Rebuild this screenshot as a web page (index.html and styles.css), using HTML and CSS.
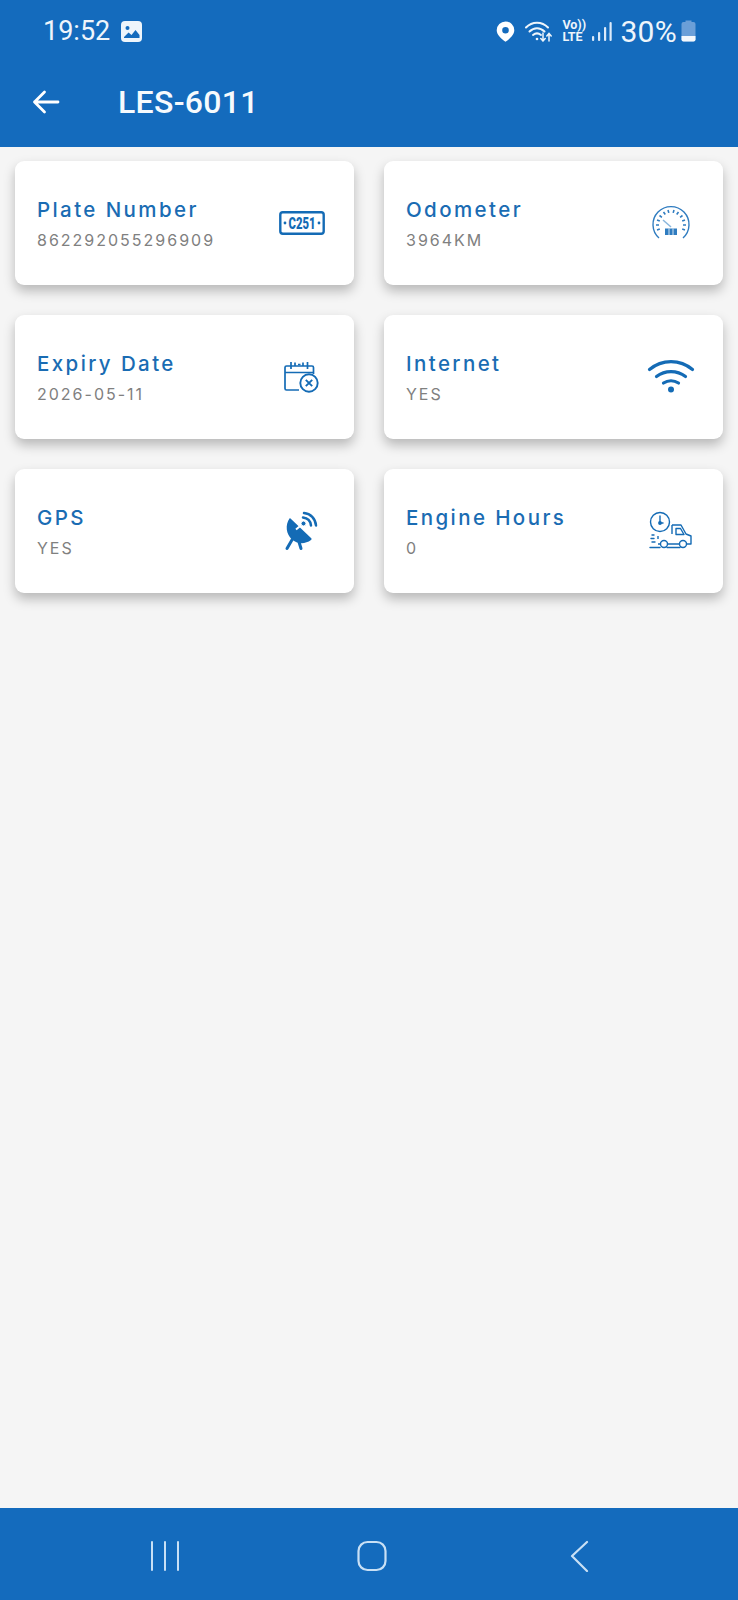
FILE: index.html
```html
<!DOCTYPE html>
<html lang="en">
<head>
    <meta charset="UTF-8">
    <meta name="viewport" content="width=device-width, initial-scale=1.0">
    <title>LES-6011</title>
    <link rel="stylesheet" href="styles.css">
</head>
<body>
    <div class="screen">
        <header class="top">
            <div class="status">
                <div class="status-left">
                    <span class="clock">19:52</span>
                    <svg class="st-photo" width="21" height="21" viewBox="0 0 21 21">
                        <rect width="21" height="21" rx="4" fill="#eef5fb"/>
                        <circle cx="6.500" cy="7" r="2" fill="#146bbd"/>
                        <path d="M3 16l4.500-4.500 3 2.500 4-5 4 5V17H3z" fill="#146bbd"/>
                    </svg>
                </div>
                <div class="status-right">
                    <svg width="19" height="21" viewBox="0 0 19 21">
                        <path fill-rule="evenodd" d="M9.500.5a8.800 8.800 0 0 1 8.800 8.800c0 4.600-5 9-8.800 11.400C5.700 18.300.7 13.900.7 9.300A8.800 8.800 0 0 1 9.500.5zm0 5.500a3.300 3.300 0 1 0 0 6.600 3.300 3.300 0 0 0 0-6.600z" fill="#fff"/>
                    </svg>
                    <svg class="st-wifi" width="27" height="22" viewBox="0 0 27 22" fill="none" stroke="#eef5fb" stroke-linecap="round">
                        <path d="M1 7.500C7 1 17 1 23 7.500" stroke-width="2"/>
                        <path d="M4.500 11.500c4.500-4.500 10.500-4.500 15 0" stroke-width="2"/>
                        <path d="M8 15c2.500-2 5.500-2 8 0" stroke-width="2"/>
                        <circle cx="12" cy="19" r="1.300" fill="#eef5fb" stroke="none"/>
                        <path d="M18 13v8M15.800 18.500l2.200 2.500 2.200-2.500M24 21v-7M21.800 16l2.200-2.500 2.200 2.500" stroke-width="1.500"/>
                    </svg>
                    <div class="volte"><span>Vo))</span><span>LTE</span></div>
                    <svg class="st-signal" width="20" height="21" viewBox="0 0 20 21" fill="#dceafa">
                        <rect x="0" y="15" width="2.200" height="5" rx="1"/>
                        <rect x="6" y="11" width="2.200" height="9" rx="1"/>
                        <rect x="12" y="6" width="2.200" height="14" rx="1"/>
                        <rect x="17.500" y="1" width="2.200" height="19" rx="1"/>
                    </svg>
                    <span class="battery-text">30%</span>
                    <svg width="15" height="22" viewBox="0 0 15 22">
                        <path d="M4.500.5h6V2h2a2 2 0 0 1 2 2v15.500a2 2 0 0 1-2 2h-10a2 2 0 0 1-2-2V4a2 2 0 0 1 2-2h2z" fill="#6b9fd8"/>
                        <path d="M.5 16h14v3.500a2 2 0 0 1-2 2h-10a2 2 0 0 1-2-2z" fill="#f4f8fc"/>
                    </svg>
                </div>
            </div>
            <div class="appbar">
                <svg class="back" width="28" height="24" viewBox="0 0 28 24" fill="none" stroke="#fff" stroke-width="2.800" stroke-linecap="round" stroke-linejoin="round">
                    <path d="M26 12H2.500M12.500 2L2.500 12l10 10"/>
                </svg>
                <h1 class="title">LES-6011</h1>
            </div>
        </header>

        <main class="grid">
            <div class="card">
                <div class="card-text">
                    <div class="card-title">Plate Number</div>
                    <div class="card-value">862292055296909</div>
                </div>
                <svg class="card-icon" viewBox="0 0 48 48" fill="none" stroke="#146bb5">
                    <rect x="2.300" y="13.300" width="43.400" height="21.400" rx="2.500" stroke-width="2.400"/>
                    <circle cx="7" cy="24" r="1.400" fill="#146bb5" stroke="none"/>
                    <circle cx="41" cy="24" r="1.400" fill="#146bb5" stroke="none"/>
                    <text class="plate-text" x="10.500" y="29.800" textLength="27" lengthAdjust="spacingAndGlyphs">C251</text>
                </svg>
            </div>

            <div class="card">
                <div class="card-text">
                    <div class="card-title">Odometer</div>
                    <div class="card-value">3964KM</div>
                </div>
                <svg class="card-icon" viewBox="0 0 48 48" fill="none" stroke="#2f7cc0" stroke-width="1.400">
                    <path d="M12 39a18 18 0 1 1 24 0"/>
                    <path d="M10 31l2.800-1M9 26h3M10 21l2.800 1M12.500 16.500l2.400 1.800M16.500 13l1.800 2.500M21 11l.8 2.900M27 11l-.8 2.900M31.500 13l-1.800 2.500M35.500 16.500l-2.400 1.800M38 21l-2.800 1M39 26h-3M38 31l-2.800-1" stroke-width="1.600"/>
                    <path d="M16 21l8 7" stroke="#8ab6dc" stroke-width="1.500"/>
                    <rect x="18" y="29.500" width="12" height="6.500" fill="#2f7cc0" stroke="none"/>
                    <path d="M22 29.500V36M26 29.500V36" stroke="#fff" stroke-width=".8"/>
                </svg>
            </div>

            <div class="card">
                <div class="card-text">
                    <div class="card-title">Expiry Date</div>
                    <div class="card-value">2026-05-11</div>
                </div>
                <svg class="card-icon" viewBox="0 0 48 48" fill="none" stroke="#146bb5" stroke-width="1.700">
                    <path d="M21 37H8.500A1.500 1.500 0 0 1 7 35.500v-21A1.500 1.500 0 0 1 8.500 13H34a1.500 1.500 0 0 1 1.500 1.500V21"/>
                    <path d="M7 19.500h28.500M13 9v7M29.500 9v7M17 13V9.500M25 13V9.500M20 11.500h2.500"/>
                    <circle cx="31" cy="30" r="8.700" stroke-width="1.900"/>
                    <path d="M27.800 26.800l6.400 6.400M34.200 26.800l-6.400 6.400" stroke-width="1.900"/>
                </svg>
            </div>

            <div class="card">
                <div class="card-text">
                    <div class="card-title">Internet</div>
                    <div class="card-value">YES</div>
                </div>
                <svg class="card-icon" viewBox="0 0 48 48" fill="none" stroke="#146bb5" stroke-width="3.200" stroke-linecap="round">
                    <path d="M2.500 16.500C15 6 33 6 45.500 16.500"/>
                    <path d="M9.500 23.500c8.500-6.500 20.500-6.500 29 0"/>
                    <path d="M16.500 30c4.500-3 10.500-3 15 0"/>
                    <circle cx="24" cy="36.500" r="3" fill="#146bb5" stroke="none"/>
                </svg>
            </div>

            <div class="card">
                <div class="card-text">
                    <div class="card-title">GPS</div>
                    <div class="card-value">YES</div>
                </div>
                <svg class="card-icon" viewBox="0 0 48 48" fill="none" stroke="#146bb5">
                    <path d="M11.500 11.500C7 18 8 27 14 32.500c5 4.500 13 5 19 .5 .8-.6 .8-1.400 0-2L12.500 11.500c-.4-.4-.8-.4-1 0z" fill="#146bb5" stroke="none"/>
                    <path d="M14.500 32l-5.500 9.500M21 35l2 6.500" stroke-width="3" stroke-linecap="round"/>
                    <path d="M18 22.500l6-5" stroke="#fff" stroke-width="2"/>
                    <circle cx="25.500" cy="16.500" r="2.500" fill="#146bb5" stroke="#fff" stroke-width="1"/>
                    <path d="M25 10.500c4.500.5 7.500 3.500 8 8M26 6c6.500.5 11.500 5.500 12 12.500" stroke-width="2.500" stroke-linecap="round"/>
                </svg>
            </div>

            <div class="card">
                <div class="card-text">
                    <div class="card-title">Engine Hours</div>
                    <div class="card-value">0</div>
                </div>
                <svg class="card-icon" viewBox="0 0 48 48" fill="none" stroke="#146bb5" stroke-width="1.400" stroke-linejoin="round">
                    <circle cx="13" cy="15" r="9.500"/>
                    <circle cx="13" cy="16" r="1.200" fill="#146bb5"/>
                    <path d="M13 8.500V16h3.500"/>
                    <path d="M25 18h9l5 9 5 2v8h-4.500M32 37H21M13 37h-2M11 29v3M25 18v9"/>
                    <path d="M29 21.500h4.500l3.500 6h-8z"/>
                    <circle cx="17" cy="37" r="3.500"/>
                    <circle cx="36" cy="37" r="3.500"/>
                    <path d="M5 28h2M4 31.500h3M5 35h3M3 40.500h10M20 40.500h13" stroke-linecap="round"/>
                </svg>
            </div>
        </main>

        <footer class="navbar">
            <div class="nav-item">
                <svg width="30" height="32" viewBox="0 0 30 32" fill="none" stroke="#c9e0f5" stroke-width="2" stroke-linecap="round">
                    <path d="M2 2v28M15 2v28M28 2v28"/>
                </svg>
            </div>
            <div class="nav-item">
                <svg width="30" height="32" viewBox="0 0 30 32" fill="none" stroke="#c9e0f5" stroke-width="2.200">
                    <rect x="1.500" y="2" width="27" height="28" rx="9"/>
                </svg>
            </div>
            <div class="nav-item">
                <svg width="30" height="32" viewBox="0 0 30 32" fill="none" stroke="#c9e0f5" stroke-width="2.200" stroke-linecap="round" stroke-linejoin="round">
                    <path d="M23 2L8 16l15 15"/>
                </svg>
            </div>
        </footer>
    </div>
</body>
</html>
```

FILE: styles.css
```css
* {
    box-sizing: border-box;
}

body {
    margin: 0;
    background-color: #f5f5f5;
    font-family: 'Inter', 'Roboto', sans-serif;
}

.screen {
    height: 1600px;
    display: flex;
    flex-direction: column;
}

.top {
    background-color: #146bbd;
    color: white;
    height: 147px;
}

.status {
    height: 62px;
    display: flex;
    justify-content: space-between;
    align-items: center;
    padding: 0 42px 0 43px;
}

.status-left {
    display: flex;
    align-items: center;
    gap: 11px;
}

.status-right {
    display: flex;
    align-items: center;
    gap: 10px;
}

.clock,
.battery-text {
    font-family: 'Roboto', sans-serif;
    font-size: 27px;
    color: #eef5fb;
}

.battery-text {
    font-size: 30px;
    letter-spacing: 0.3px;
    margin: 0 -6px 0 -2px;
}

.volte {
    display: flex;
    flex-direction: column;
    width: 21px;
    font-family: 'Roboto', sans-serif;
    font-size: 12.5px;
    font-weight: 700;
    line-height: 12px;
    color: #eef5fb;
}

.st-signal {
    margin-left: -1px;
}

.appbar {
    height: 85px;
    display: flex;
    align-items: center;
    padding: 0 0 6px 32px;
}

.title {
    margin: 0 0 0 58px;
    font-family: 'Roboto', sans-serif;
    font-size: 32px;
    font-weight: 500;
    letter-spacing: 0.3px;
    color: #f6fafd;
}

.grid {
    flex: 1;
    display: grid;
    grid-template-columns: 339px 339px;
    grid-auto-rows: 124px;
    column-gap: 30px;
    row-gap: 30px;
    padding: 14px 15px 0;
    align-content: start;
}

.card {
    background-color: white;
    border-radius: 9px;
    box-shadow: 0 6px 12px rgba(0, 0, 0, 0.25);
    display: flex;
    justify-content: space-between;
    align-items: center;
    padding: 0 28px 0 22px;
}

.card-text {
    padding-top: 1px;
}

.card-title {
    font-size: 20.5px;
    font-weight: 500;
    letter-spacing: 2.4px;
    line-height: 24px;
    color: #1a6cb3;
}

.card-value {
    margin-top: 8px;
    font-size: 16px;
    letter-spacing: 2px;
    line-height: 20px;
    color: #808080;
}

.card-icon {
    width: 48px;
    height: 48px;
    flex-shrink: 0;
}

.plate-text {
    font-family: 'Roboto', sans-serif;
    font-size: 16px;
    font-weight: 900;
    fill: #146bb5;
    stroke: none;
}

.navbar {
    height: 92px;
    background-color: #146bbd;
    display: flex;
    justify-content: space-between;
    align-items: flex-start;
    padding: 32px 144px 0 150px;
}

.nav-item {
    display: flex;
}
```
